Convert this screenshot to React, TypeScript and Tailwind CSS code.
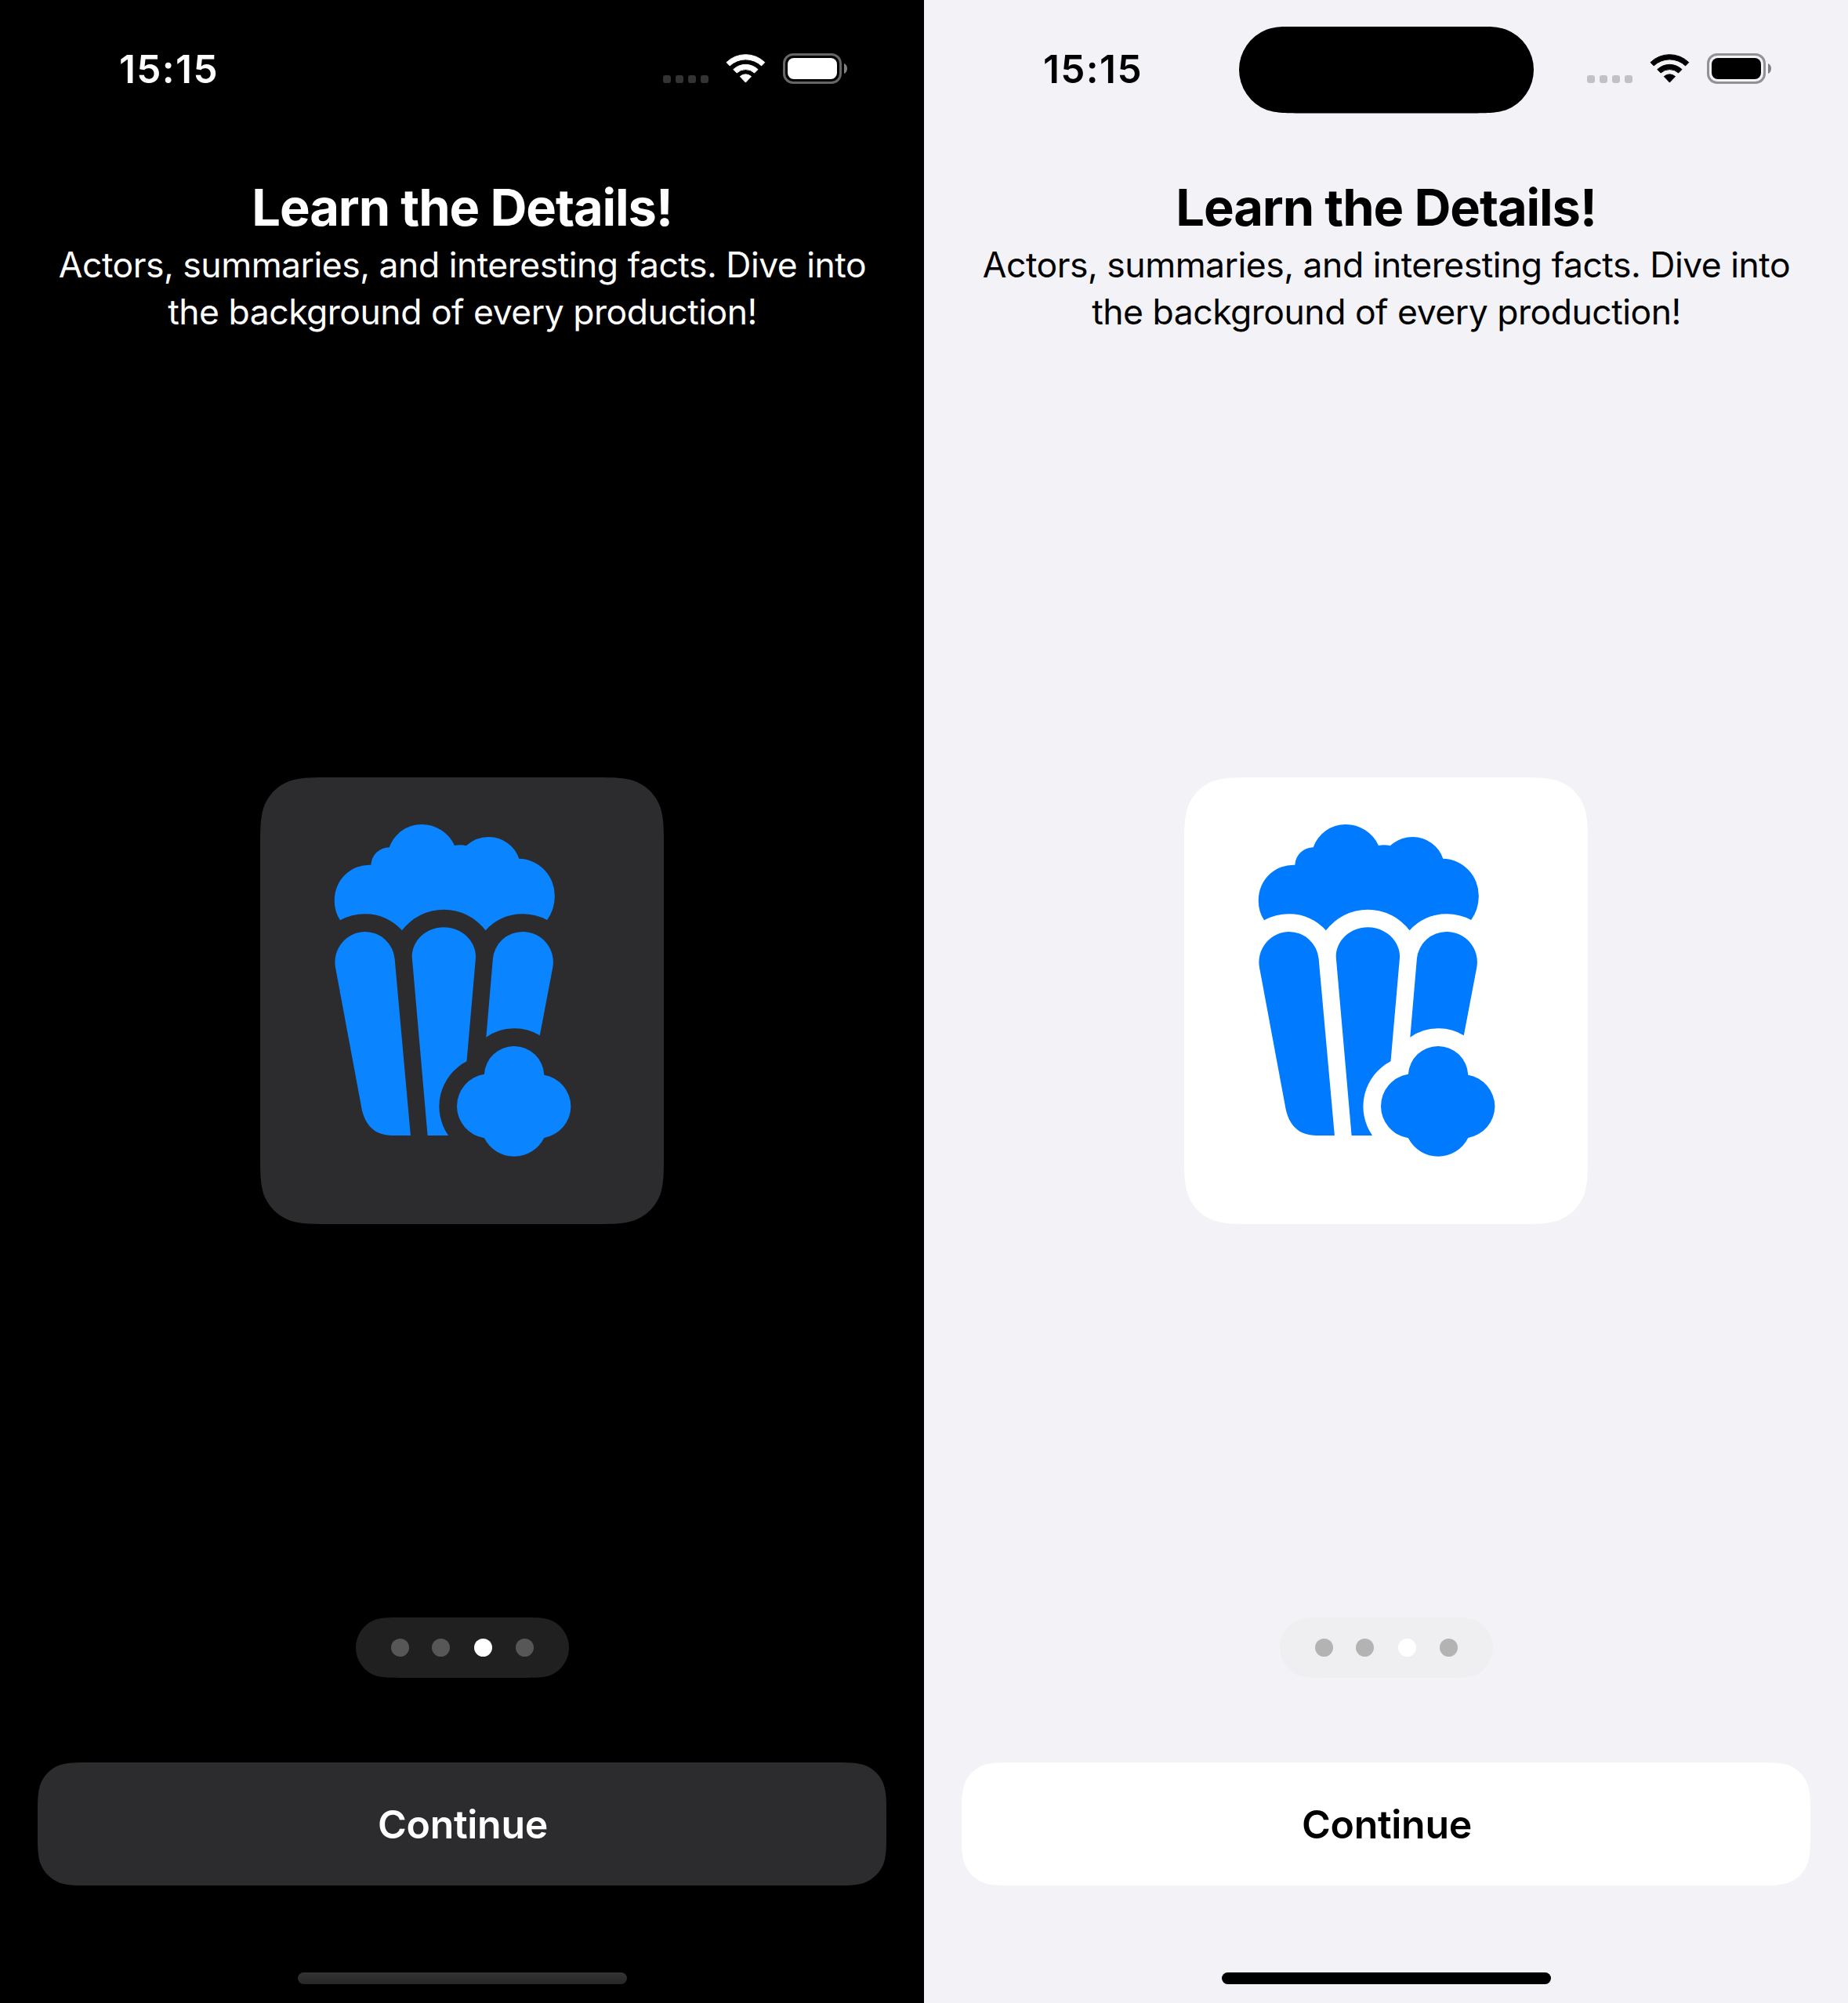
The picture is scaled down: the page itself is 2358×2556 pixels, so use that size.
import React from "react";

type Theme = "dark" | "light";

/** Rounded rectangle outline with smoothly eased ("continuous") corners. */
function continuousRect(w: number, h: number, r: number): string {
  const a = 1.52866483 * r;
  const b = 1.08849323 * r;
  const c = 0.86840689 * r;
  const d = 0.63149399 * r;
  const e = 0.074911 * r;
  const f = 0.37282392 * r;
  const g = 0.16905899 * r;
  return [
    `M${a} 0L${w - a} 0`,
    `C${w - b} 0 ${w - c} 0 ${w - d} ${e}C${w - f} ${g} ${w - g} ${f} ${w - e} ${d}C${w} ${c} ${w} ${b} ${w} ${a}`,
    `L${w} ${h - a}`,
    `C${w} ${h - b} ${w} ${h - c} ${w - e} ${h - d}C${w - g} ${h - f} ${w - f} ${h - g} ${w - d} ${h - e}C${w - c} ${h} ${w - b} ${h} ${w - a} ${h}`,
    `L${a} ${h}`,
    `C${b} ${h} ${c} ${h} ${d} ${h - e}C${f} ${h - g} ${g} ${h - f} ${e} ${h - d}C0 ${h - c} 0 ${h - b} 0 ${h - a}`,
    `L0 ${a}`,
    `C0 ${b} 0 ${c} ${e} ${d}C${g} ${f} ${f} ${g} ${d} ${e}C${c} 0 ${b} 0 ${a} 0Z`,
  ].join("");
}

/** Capsule whose round ends ease into the straight edges. */
function continuousCapsule(w: number, h: number): string {
  const r = h / 2;
  const a = 1.52866483 * r;
  const b = 1.08849323 * r;
  const c = 0.86840689 * r;
  const d = 0.63149399 * r;
  const e = 0.074911 * r;
  return [
    `M${a} 0L${w - a} 0C${w - b} 0 ${w - c} 0 ${w - d} ${e}`,
    `A${r} ${r} 0 0 1 ${w} ${r}A${r} ${r} 0 0 1 ${w - d} ${h - e}`,
    `C${w - c} ${h} ${w - b} ${h} ${w - a} ${h}L${a} ${h}C${b} ${h} ${c} ${h} ${d} ${h - e}`,
    `A${r} ${r} 0 0 1 0 ${r}A${r} ${r} 0 0 1 ${d} ${e}C${c} 0 ${b} 0 ${a} 0Z`,
  ].join("");
}

const cardShape = { clipPath: `path("${continuousRect(515, 570, 60)}")` };
const buttonShape = { clipPath: `path("${continuousRect(1083, 157, 45)}")` };
const pagerShape = { clipPath: `path("${continuousCapsule(272, 77)}")` };
const islandShape = { clipPath: `path("${continuousCapsule(376, 111)}")` };

const themes = {
  dark: {
    screen: "bg-black text-white",
    surface: "bg-[#2c2c2e]",
    accent: "text-[#0a84ff]",
    island: "",
    signal: "bg-[#333333]",
    battery: "border-[#666666]",
    nub: "text-[#808080]",
    pager: "bg-[#202020]",
    dot: "bg-[#575757]",
    home: "bg-linear-to-b from-[#343434] to-[#272727]",
  },
  light: {
    screen: "bg-[#f2f2f7] text-black",
    surface: "bg-white",
    accent: "text-[#007aff]",
    island: "bg-black",
    signal: "bg-[#c2c1c6]",
    battery: "border-[#929194]",
    nub: "text-[#808083]",
    pager: "bg-[#efeff1]",
    dot: "bg-[#b3b3b3]",
    home: "bg-black",
  },
};

function WifiIcon() {
  return (
    <svg
      className="ml-[22px] mt-[28px] h-[39px] w-[51px]"
      viewBox="0 0 51 39"
      fill="currentColor"
      stroke="currentColor"
      strokeWidth="1"
      strokeLinejoin="round"
    >
      <path d="M1 11.6A35 35 0 0 1 49.8 11.6L45.6 15.9A29.4 29.4 0 0 0 5.2 15.9Z" />
      <path d="M9.8 20.6A22.6 22.6 0 0 1 41 20.6L36.6 25A16.4 16.4 0 0 0 14.2 25Z" />
      <path d="M18.3 29.6A10.6 10.6 0 0 1 32.5 29.6L25.4 37.1Z" />
    </svg>
  );
}

function PopcornIcon() {
  return (
    <svg className="h-[570px] w-[515px]" viewBox="0 0 515 570" fill="currentColor">
      <path d="M102 182.3A44.8 44.8 0 0 1 94.8 156.3A44.7 44.7 0 0 1 141.3 111.7A23.4 23.4 0 0 1 164.7 89.3A43.8 43.8 0 0 1 206 60A46.2 46.2 0 0 1 248 87Q255.4 85.2 262.8 87.3A42.4 42.4 0 0 1 291.8 76A41 41 0 0 1 330.3 103.7A46.5 47.5 0 0 1 375.8 152A52 52 0 0 1 366.1 182A66 66 0 0 0 334.1 174.3A62 62 0 0 0 287.6 195.3A66.8 66.8 0 0 0 180.9 195.3A62 62 0 0 0 134 174.3A66 66 0 0 0 102 182.3Z" />
      <path d="M96 242.5A38.8 38.8 0 0 1 134 197A38 38 0 0 1 171.6 231.3L191.9 457H168.8C146 457 133.5 444 129.2 421.3Z" />
      <path d="M193.7 229C193.7 208 212 191.3 234.2 191.3C256.5 191.3 275.1 208 275.1 229L263.5 362.3A64.8 64.8 0 0 0 240.1 457H213.6Z" />
      <path d="M296.9 231.3A38 38 0 0 1 334.8 197A38.8 38.8 0 0 1 373.3 242.5L356.8 329.3A62 62 0 0 0 323.8 320.3A61 61 0 0 0 288.3 331.7Z" />
      <path d="M285.9 378.7A38 38 0 0 1 323.8 343A38.3 38.3 0 0 1 362.3 379.7A41.4 41.4 0 0 1 396.4 419.7A41.4 41.4 0 0 1 362.3 460A42.8 42.8 0 0 1 285.9 460.3A41.3 41.3 0 0 1 285.9 378.7Z" />
    </svg>
  );
}

function StatusBar({ theme }: { theme: Theme }) {
  const t = themes[theme];
  return (
    <header className="flex h-[178px] w-full items-start pt-[34px]">
      <div className="w-[402px] pl-[152px] pt-[24px] text-[49.5px] leading-[60px] font-[580] tracking-[1.4px]">
        15:15
      </div>
      <div className={`-mt-[0.5px] h-[111px] w-[376px] ${t.island}`} style={islandShape} />
      <div className="flex items-start pl-[68px] pt-[6px]">
        <div className="mt-[56px] flex gap-[6px]">
          {[0, 1, 2, 3].map((i) => (
            <span key={i} className={`size-[10px] rounded-[3px] ${t.signal}`} />
          ))}
        </div>
        <WifiIcon />
        <div className={`ml-[22px] mt-[28px] h-[39px] w-[75px] rounded-[13px] border-3 p-[3px] ${t.battery}`}>
          <div className="h-full w-full rounded-[8px] bg-current" />
        </div>
        <svg className={`ml-[3px] mt-[41px] h-[13px] w-[4px] ${t.nub}`} viewBox="0 0 4 13" fill="currentColor">
          <path d="M0 0C2.6 1.1 4 3.7 4 6.5S2.6 11.9 0 13Z" />
        </svg>
      </div>
    </header>
  );
}

function Screen({ theme }: { theme: Theme }) {
  const t = themes[theme];
  return (
    <section className={`flex h-[2556px] w-[1179px] flex-col items-center ${t.screen}`}>
      <StatusBar theme={theme} />
      <h1 className="mt-[47px] text-[65px] leading-[80px] font-bold tracking-[-1.1px] whitespace-nowrap">
        Learn the Details!
      </h1>
      <p className="mt-[3px] pl-px text-center text-[44.5px] leading-[60px] tracking-[-0.5px] whitespace-nowrap">
        Actors, summaries, and interesting facts. Dive into
        <br />
        the background of every production!
      </p>
      <div className={`mt-[564px] h-[570px] w-[515px] shrink-0 ${t.surface} ${t.accent}`} style={cardShape}>
        <PopcornIcon />
      </div>
      <div className={`mt-[502px] ml-px flex h-[77px] w-[272px] items-center pl-[45px] ${t.pager}`} style={pagerShape}>
        <span className={`size-[23px] rounded-full ${t.dot}`} />
        <span className={`ml-[29px] size-[23px] rounded-full ${t.dot}`} />
        <span className="ml-[31px] size-[23px] rounded-full bg-white" />
        <span className={`ml-[30px] size-[23px] rounded-full ${t.dot}`} />
      </div>
      <button
        className={`mt-[108px] h-[157px] w-[1083px] pt-[2px] pl-[2px] text-[50px] font-[580] tracking-[-0.3px] ${t.surface}`}
        style={buttonShape}
      >
        Continue
      </button>
      <div className={`mt-[111px] ml-px h-[15px] w-[420px] rounded-full ${t.home}`} />
    </section>
  );
}

export default function App() {
  return (
    <main className="flex w-[2358px] font-['Inter',sans-serif]">
      <Screen theme="dark" />
      <Screen theme="light" />
    </main>
  );
}
